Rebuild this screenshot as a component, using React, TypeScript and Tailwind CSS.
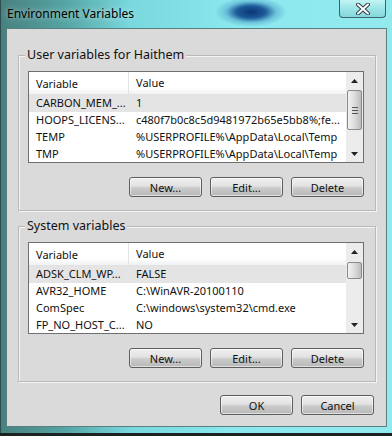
import React from 'react'

// ── Data ───────────────────────────────────────────────────────
const USER_VARS = [
  { name: 'CARBON_MEM_...', value: '1' },
  { name: 'HOOPS_LICENS...', value: 'c480f7b0c8c5d9481972b65e5bb8%;fe...' },
  { name: 'TEMP', value: '%USERPROFILE%\\AppData\\Local\\Temp' },
  { name: 'TMP', value: '%USERPROFILE%\\AppData\\Local\\Temp' },
]

const SYSTEM_VARS = [
  { name: 'ADSK_CLM_WP...', value: 'FALSE' },
  { name: 'AVR32_HOME', value: 'C:\\WinAVR-20100110' },
  { name: 'ComSpec', value: 'C:\\windows\\system32\\cmd.exe' },
  { name: 'FP_NO_HOST_C...', value: 'NO' },
]

function Arrow({ down }: { down?: boolean }) {
  return (
    <svg width="7" height="4" viewBox="0 0 7 4">
      <polygon points={down ? '0,0 7,0 3.5,4' : '0,4 7,4 3.5,0'} fill="#222" />
    </svg>
  )
}

function WinButton({ label, className = '' }: { label: string; className?: string }) {
  return (
    <button
      className={`h-[20px] w-[73px] rounded-[3px] border border-[#5e5e5e] bg-[linear-gradient(180deg,#f0f0f0_0%,#e2e2e2_45%,#cbcbcb_55%,#b8b8b8_100%)] text-[11px] leading-none text-[#111] shadow-[inset_0_0_0_1px_rgba(255,255,255,0.55)] ${className}`}
    >
      {label}
    </button>
  )
}

function VarList({
  rows,
  thumbClass,
  grip,
}: {
  rows: { name: string; value: string }[]
  thumbClass: string
  grip?: boolean
}) {
  return (
    <div className="flex h-[92px] border border-[#6f6f6f] bg-white">
      <div className="flex-1 overflow-hidden">
        {/* header */}
        <div className="flex h-[23px] items-center border-b border-[#e2e2e2] bg-[linear-gradient(180deg,#ffffff_0%,#ffffff_70%,#f1f2f4_100%)]">
          <div className="h-full w-[100px] border-r border-[#e3e3e3] pl-[7px] leading-[23px]">Variable</div>
          <div className="pl-[7px]">Value</div>
        </div>
        {rows.map((row, i) => (
          <div
            key={row.name}
            className={`flex h-[17px] items-center whitespace-nowrap ${i === 0 ? 'bg-[#e4e4e4]' : ''}`}
          >
            <div className="w-[100px] pl-[7px]">{row.name}</div>
            <div className="pl-[7px]">{row.value}</div>
          </div>
        ))}
      </div>

      {/* scrollbar */}
      <div className="flex w-[17px] flex-col bg-[#ececec]">
        <div className="flex h-[17px] items-center justify-center">
          <Arrow />
        </div>
        <div className="flex-1 px-[1px]">
          <div
            className={`flex flex-col items-center justify-center gap-[2px] rounded-[2px] border border-[#8a8a8a] bg-[linear-gradient(90deg,#f3f3f3_0%,#dcdcdc_50%,#bcbcbc_100%)] ${thumbClass}`}
          >
            {grip && (
              <>
                <div className="h-px w-[6px] bg-[#555]" />
                <div className="h-px w-[6px] bg-[#555]" />
                <div className="h-px w-[6px] bg-[#555]" />
              </>
            )}
          </div>
        </div>
        <div className="flex h-[17px] items-center justify-center">
          <Arrow down />
        </div>
      </div>
    </div>
  )
}

function GroupBox({
  title,
  rows,
  thumbClass,
  grip,
  className = '',
}: {
  title: string
  rows: { name: string; value: string }[]
  thumbClass: string
  grip?: boolean
  className?: string
}) {
  return (
    <div
      className={`relative ml-[11px] mr-[10px] border border-[#b9b9b9] pb-[13px] pl-[9px] pr-[11px] pt-[15px] shadow-[inset_1px_1px_0_#f4f4f4,1px_1px_0_#f4f4f4] ${className}`}
    >
      <span className="absolute -top-[10px] left-[6px] bg-[#dadada] px-[2px] text-[12.5px] leading-[18px] text-[#111]">
        {title}
      </span>
      <VarList rows={rows} thumbClass={thumbClass} grip={grip} />
      <div className="mt-[14px] flex justify-end gap-[8px]">
        <WinButton label="New..." />
        <WinButton label="Edit..." />
        <WinButton label="Delete" />
      </div>
    </div>
  )
}

export default function App() {
  return (
    <div className="h-[436px] w-[392px] overflow-hidden bg-[#1c2222] font-['Noto_Sans','DejaVu_Sans',sans-serif] text-[11px] text-[#111]">
      {/* ── Window frame ─────────────────────────────── */}
      <div className="flex h-[433px] flex-col border-l border-[#2d4d4f] bg-[radial-gradient(ellipse_36px_15px_at_250px_12px,#0c3472_0%,#1d5a98_40%,rgba(60,140,190,0.4)_70%,transparent_100%),linear-gradient(90deg,#47817f_0%,#55a3a3_16%,#78d8de_33%,#8ae8ee_60%,#93eaee_100%)]">
        {/* title bar */}
        <div className="flex h-[28px] items-start justify-between">
          <span className="pl-[6px] pt-[6px] text-[12px] leading-[16px] text-black [text-shadow:0_0_6px_rgba(255,255,255,0.7)]">
            Environment Variables
          </span>
          <div className="mr-[6px] flex h-[18px] w-[47px] items-center justify-center rounded-b-[4px] border border-t-0 border-[#3c6466] bg-[linear-gradient(180deg,#c4f3f4_0%,#9de5e8_50%,#84d8dc_100%)]">
            <svg width="14" height="12" viewBox="0 0 14 12">
              <path d="M2 1.5 L12 10.5 M12 1.5 L2 10.5" stroke="#2e3e44" strokeWidth="4" strokeLinecap="round" />
              <path d="M2 1.5 L12 10.5 M12 1.5 L2 10.5" stroke="#ffffff" strokeWidth="2" strokeLinecap="round" />
            </svg>
          </div>
        </div>

        {/* client area */}
        <div className="mx-[5px] h-[399px] border border-[#5a7f80] bg-[#dadada]">
          <GroupBox
            title="User variables for Haithem"
            rows={USER_VARS}
            thumbClass="mt-[1px] h-[40px]"
            grip
            className="mt-[26px]"
          />
          <GroupBox
            title="System variables"
            rows={SYSTEM_VARS}
            thumbClass="mt-[2px] h-[17px]"
            className="mt-[15px]"
          />
          <div className="mr-[12px] mt-[13px] flex justify-end gap-[8px]">
            <WinButton label="OK" />
            <WinButton label="Cancel" />
          </div>
        </div>
      </div>
    </div>
  )
}
